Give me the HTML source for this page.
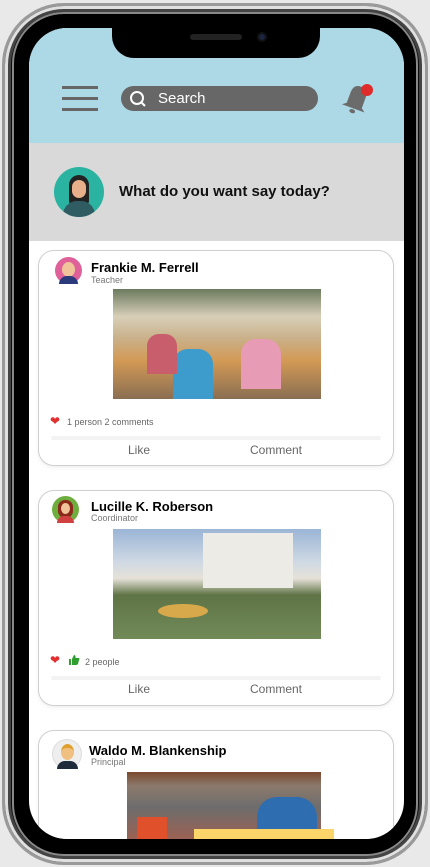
<!DOCTYPE html>
<html><head><meta charset="utf-8"><style>
*{margin:0;padding:0;box-sizing:border-box}
body{width:430px;height:867px;background:#e9e9e9;position:relative;overflow:hidden;font-family:"Liberation Sans",sans-serif}
.frame{position:absolute;left:2px;top:3px;width:426px;height:862px;border-radius:62px;background:#1a1a1a;border:3px solid #9a9a9a;box-shadow:inset 0 0 0 3px #e0e0e0,inset 0 0 0 6px #444,inset 0 0 0 9px #0a0a0a}
.frame2{position:absolute;left:12px;top:12px;width:406px;height:844px;border-radius:52px;background:#000;border:2px solid #888}
.screen{position:absolute;left:29px;top:28px;width:375px;height:811px;border-radius:38px;overflow:hidden;background:#fff}
.notch{position:absolute;left:112px;top:28px;width:208px;height:30px;background:#000;border-radius:0 0 22px 22px}
.spk{position:absolute;left:190px;top:34px;width:52px;height:6px;border-radius:3px;background:#222}
.cam{position:absolute;left:257px;top:32px;width:10px;height:10px;border-radius:50%;background:#1c2540;border:2px solid #111}
.hdr{position:absolute;left:0;top:0;width:375px;height:115px;background:#add8e6}
.gray{position:absolute;left:0;top:115px;width:375px;height:98px;background:#d9d9d9}
.card{position:absolute;left:9px;width:356px;border:1px solid #cfcfcf;border-radius:16px;background:#fff;box-shadow:0 2px 4px rgba(0,0,0,.06)}
.name{position:absolute;font-weight:bold;font-size:13px;color:#000}
.role{position:absolute;font-size:9px;color:#777}
.av{position:absolute;width:27px;height:27px;border-radius:50%}
.stat{position:absolute;font-size:9px;color:#666}
.act{position:absolute;font-size:12px;color:#666}
.sep{position:absolute;left:12px;width:330px;height:4px;background:#f3f3f3;border-radius:2px}
</style></head><body>
<div class="frame"></div><div class="frame2"></div>
<div class="screen">
 <div class="hdr">
  <div style="position:absolute;left:33px;top:58px;width:36px;height:3px;background:#666"></div>
  <div style="position:absolute;left:33px;top:69px;width:36px;height:3px;background:#666"></div>
  <div style="position:absolute;left:33px;top:80px;width:36px;height:3px;background:#666"></div>
  <div style="position:absolute;left:92px;top:58px;width:197px;height:25px;border-radius:13px;background:#676767"></div>
  <svg style="position:absolute;left:100px;top:62px" width="18" height="18" viewBox="0 0 18 18"><circle cx="8" cy="8" r="6" fill="none" stroke="#fff" stroke-width="2"/><line x1="12" y1="12" x2="16" y2="16" stroke="#fff" stroke-width="2"/></svg>
  <div style="position:absolute;left:129px;top:62px;font-size:15px;color:#fff">Search</div>
  <svg style="position:absolute;left:308px;top:50px" width="40" height="40" viewBox="0 0 40 40"><g transform="rotate(20 20 20)"><path d="M12 28 L12 17 Q12 8 20 8 Q28 8 28 17 L28 28 L32 31 L8 31 Z" fill="#6b6b6b"/><ellipse cx="20" cy="34" rx="3" ry="2" fill="#6b6b6b"/></g></svg>
  <div style="position:absolute;left:332px;top:56px;width:12px;height:12px;border-radius:50%;background:#e02b2b"></div>
 </div>
 <div class="gray">
  <div style="position:absolute;left:25px;top:24px;width:50px;height:50px;border-radius:50%;background:#2ab3a0;overflow:hidden">
   <div style="position:absolute;left:15px;top:8px;width:20px;height:30px;border-radius:10px 10px 4px 4px;background:#222"></div>
   <div style="position:absolute;left:18px;top:13px;width:14px;height:18px;border-radius:7px;background:#e8b08a"></div>
   <div style="position:absolute;left:9px;top:34px;width:32px;height:20px;border-radius:14px 14px 0 0;background:#2f5b63"></div>
  </div>
  <div style="position:absolute;left:90px;top:40px;font-size:15px;font-weight:bold;color:#111">What do you want say today?</div>
 </div>
 <div class="card" style="top:222px;height:216px">
  <div class="av" style="left:16px;top:6px;background:#e0609a"><div style="position:absolute;left:7px;top:5px;width:13px;height:15px;border-radius:50%;background:#f0c39a"></div><div style="position:absolute;left:4px;top:19px;width:19px;height:8px;border-radius:8px 8px 0 0;background:#2b3a7a"></div></div>
  <div class="name" style="left:52px;top:9px">Frankie M. Ferrell</div>
  <div class="role" style="left:52px;top:24px">Teacher</div>
  <div style="position:absolute;left:74px;top:38px;width:208px;height:110px;background:linear-gradient(180deg,#6b7a5e 0%,#d8cfb8 25%,#c9b089 45%,#d39a55 65%,#8a6e52 100%)">
   <div style="position:absolute;left:60px;top:60px;width:40px;height:50px;background:#3d9ccb;border-radius:15px 15px 0 0"></div>
   <div style="position:absolute;left:128px;top:50px;width:40px;height:50px;background:#e79bb4;border-radius:15px 15px 0 0"></div>
   <div style="position:absolute;left:34px;top:45px;width:30px;height:40px;background:#c85d6c;border-radius:12px 12px 0 0"></div>
  </div>
  <div style="position:absolute;left:11px;top:163px;color:#e03030;font-size:12px">❤</div>
  <div class="stat" style="left:28px;top:166px">1 person 2 comments</div>
  <div class="sep" style="top:185px"></div>
  <div class="act" style="left:89px;top:192px">Like</div>
  <div class="act" style="left:211px;top:192px">Comment</div>
 </div>
 <div class="card" style="top:462px;height:216px">
  <div class="av" style="left:13px;top:5px;background:#6fae3e"><div style="position:absolute;left:6px;top:4px;width:15px;height:18px;border-radius:7px;background:#8b2a1a"></div><div style="position:absolute;left:9px;top:7px;width:9px;height:11px;border-radius:50%;background:#f0c39a"></div><div style="position:absolute;left:5px;top:20px;width:17px;height:7px;border-radius:7px 7px 0 0;background:#d04040"></div></div>
  <div class="name" style="left:52px;top:8px">Lucille K. Roberson</div>
  <div class="role" style="left:52px;top:22px">Coordinator</div>
  <div style="position:absolute;left:74px;top:38px;width:208px;height:110px;background:linear-gradient(180deg,#9bb5d6 0%,#cfd9e4 30%,#e6e1d8 45%,#5f7446 60%,#718a58 100%)">
   <div style="position:absolute;left:90px;top:4px;width:90px;height:55px;background:#ecebe6"></div>
   <div style="position:absolute;left:45px;top:75px;width:50px;height:14px;border-radius:50%;background:#d8a94a"></div>
  </div>
  <div style="position:absolute;left:11px;top:162px;color:#e03030;font-size:12px">❤</div>
  <svg style="position:absolute;left:29px;top:163px" width="12" height="12" viewBox="0 0 12 12"><path d="M1 5 H3 V11 H1 Z M4 5 L6 1 Q8 1 7.5 4 H11 Q12 5 11 6 L10 10 Q9.5 11 8 11 H4 Z" fill="#2e9e2e"/></svg>
  <div class="stat" style="left:46px;top:166px">2 people</div>
  <div class="sep" style="top:185px"></div>
  <div class="act" style="left:89px;top:191px">Like</div>
  <div class="act" style="left:211px;top:191px">Comment</div>
 </div>
 <div class="card" style="top:702px;height:140px">
  <div class="av" style="left:13px;top:8px;width:30px;height:30px;background:#eee;border:1px solid #ddd"><div style="position:absolute;left:8px;top:4px;width:13px;height:16px;border-radius:50%;background:#f0c080;border-top:4px solid #e0a030"></div><div style="position:absolute;left:4px;top:21px;width:21px;height:8px;border-radius:8px 8px 0 0;background:#1f2a3a"></div></div>
  <div class="name" style="left:50px;top:12px">Waldo M. Blankenship</div>
  <div class="role" style="left:52px;top:26px">Principal</div>
  <div style="position:absolute;left:88px;top:41px;width:194px;height:70px;background:linear-gradient(180deg,#7a4a2e 0%,#8c7a6c 20%,#6d6d6d 50%,#a06050 100%)">
   <div style="position:absolute;left:10px;top:45px;width:30px;height:25px;background:#e0502a"></div>
   <div style="position:absolute;left:130px;top:25px;width:60px;height:45px;background:#2e6db0;border-radius:20px 20px 0 0"></div>
  </div>
  <div style="position:absolute;left:155px;top:98px;width:140px;height:20px;background:#fbd46a"></div>
 </div>
</div>
<div class="notch"></div><div class="spk"></div><div class="cam"></div>
</body></html>
